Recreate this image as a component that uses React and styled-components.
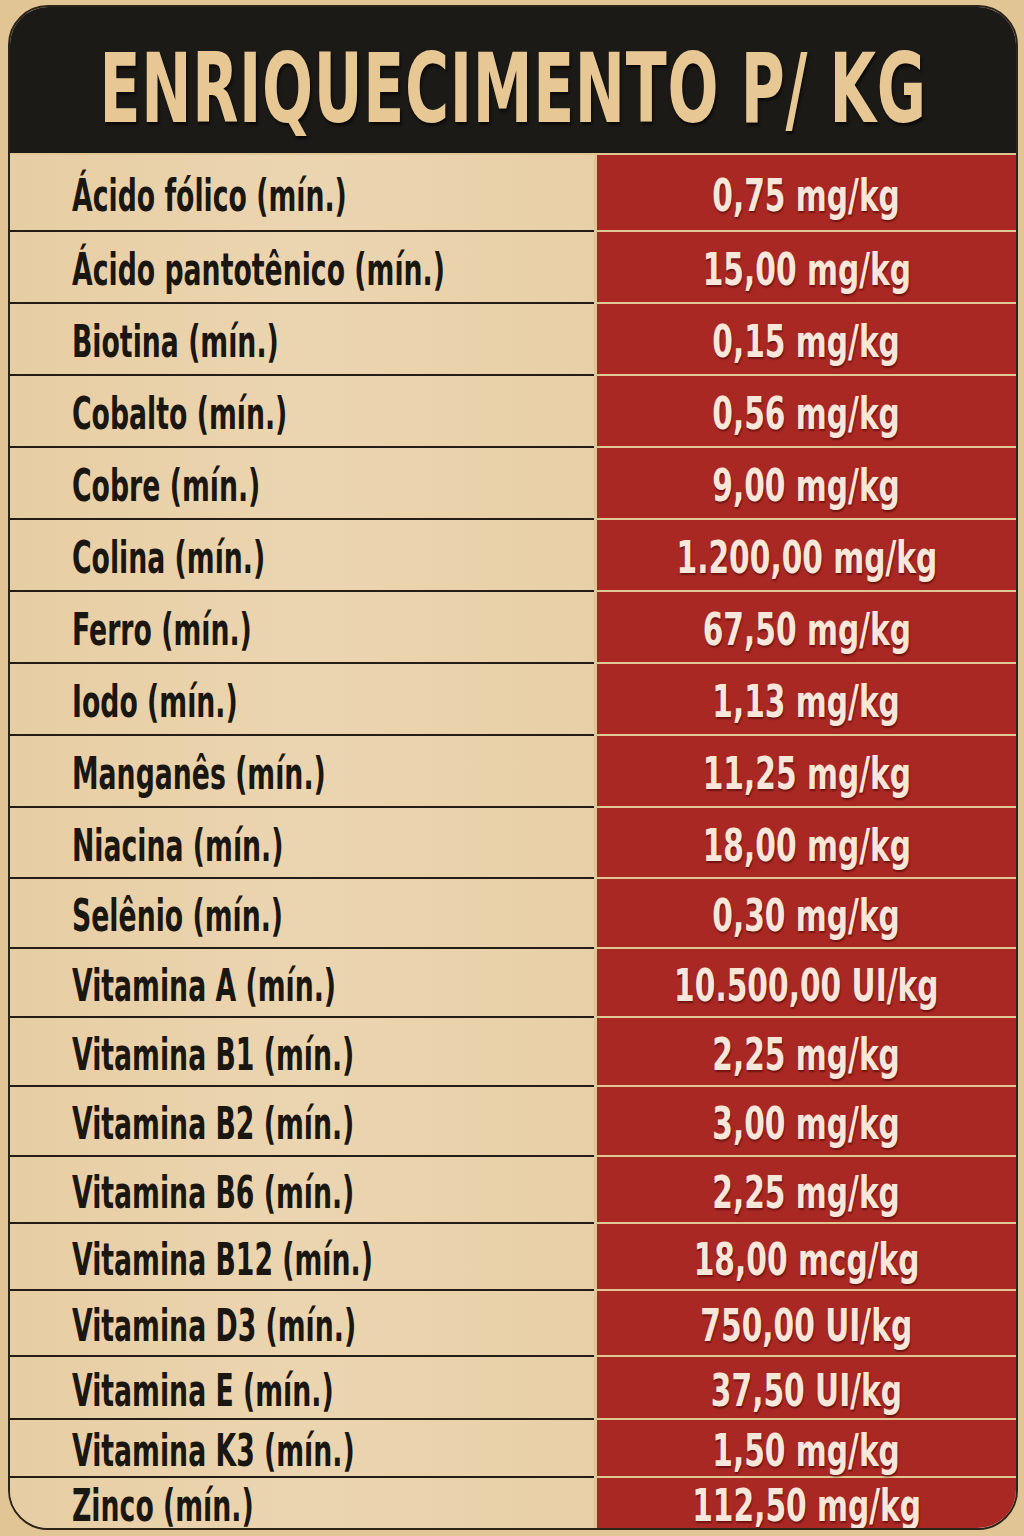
import { Fragment } from "react";
import styled, { createGlobalStyle } from "styled-components";

const GlobalStyle = createGlobalStyle`
  html, body {
    margin: 0;
    padding: 0;
    background: #e2c595;
  }
  body {
    font-family: "DejaVu Sans Condensed", "DejaVu Sans", sans-serif;
  }
`;

const rows = [
  { name: "Ácido fólico (mín.)", value: "0,75 mg/kg", h: 77 },
  { name: "Ácido pantotênico (mín.)", value: "15,00 mg/kg", h: 72 },
  { name: "Biotina (mín.)", value: "0,15 mg/kg", h: 72 },
  { name: "Cobalto (mín.)", value: "0,56 mg/kg", h: 72 },
  { name: "Cobre (mín.)", value: "9,00 mg/kg", h: 72 },
  { name: "Colina (mín.)", value: "1.200,00 mg/kg", h: 72 },
  { name: "Ferro (mín.)", value: "67,50 mg/kg", h: 72 },
  { name: "Iodo (mín.)", value: "1,13 mg/kg", h: 72 },
  { name: "Manganês (mín.)", value: "11,25 mg/kg", h: 72 },
  { name: "Niacina (mín.)", value: "18,00 mg/kg", h: 71 },
  { name: "Selênio (mín.)", value: "0,30 mg/kg", h: 70 },
  { name: "Vitamina A (mín.)", value: "10.500,00 UI/kg", h: 69 },
  { name: "Vitamina B1 (mín.)", value: "2,25 mg/kg", h: 69 },
  { name: "Vitamina B2 (mín.)", value: "3,00 mg/kg", h: 70 },
  { name: "Vitamina B6 (mín.)", value: "2,25 mg/kg", h: 67 },
  { name: "Vitamina B12 (mín.)", value: "18,00 mcg/kg", h: 67 },
  { name: "Vitamina D3 (mín.)", value: "750,00 UI/kg", h: 66 },
  { name: "Vitamina E (mín.)", value: "37,50 UI/kg", h: 63 },
  { name: "Vitamina K3 (mín.)", value: "1,50 mg/kg", h: 58 },
  { name: "Zinco (mín.)", value: "112,50 mg/kg", h: 50 },
];

const Page = styled.div`
  padding: 5px 6px 4px 8px;
  background: #e2c595;
`;

const Card = styled.div`
  border: 2px solid #2b241b;
  border-radius: 40px;
  overflow: hidden;
  background: #e9d1a9;
`;

const Header = styled.div`
  height: 148px;
  background: #1c1a17;
  display: flex;
  align-items: center;
  justify-content: center;
  border-bottom: 2px solid #e2c595;
  box-sizing: border-box;
`;

const Title = styled.h1`
  margin: 0;
  font-family: "DejaVu Sans Condensed", "DejaVu Sans", sans-serif;
  font-weight: 700;
  font-size: 96px;
  line-height: 1;
  color: #e7c794;
  letter-spacing: 1px;
  transform: scaleX(0.695);
  white-space: nowrap;
  text-shadow: 2px 3px 3px rgba(0, 0, 0, 0.6);
  padding-top: 18px;
`;

const Table = styled.div`
  display: grid;
  grid-template-columns: 584px 1fr;
`;

const Label = styled.div`
  height: ${(p) => p.$h}px;
  box-sizing: border-box;
  border-bottom: ${(p) => (p.$last ? "none" : "2px solid #231d16")};
  background: linear-gradient(90deg, #e7cda3, #ebd5b0 50%, #e8cfa7);
  display: flex;
  align-items: center;
  padding-left: 62px;
`;

const Value = styled.div`
  height: ${(p) => p.$h}px;
  box-sizing: border-box;
  border-left: 3px solid #e2c595;
  border-bottom: ${(p) => (p.$last ? "none" : "2px solid #e2c595")};
  background: #aa2824;
  display: flex;
  align-items: center;
  justify-content: center;
`;

const LabelText = styled.span`
  display: inline-block;
  font-weight: 700;
  font-size: 44px;
  line-height: 1;
  color: #1a1612;
  white-space: nowrap;
  transform: scaleX(0.675);
  transform-origin: left center;
  padding-top: 6px;
`;

const ValueText = styled.span`
  display: inline-block;
  font-weight: 700;
  font-size: 44px;
  line-height: 1;
  color: #f6e7da;
  white-space: nowrap;
  transform: scaleX(0.75);
  transform-origin: center;
  padding-top: 6px;
  text-shadow: 1px 2px 2px rgba(60, 0, 0, 0.55);
`;

export default function App() {
  return (
    <>
      <GlobalStyle />
      <Page>
        <Card>
          <Header>
            <Title>ENRIQUECIMENTO P/ KG</Title>
          </Header>
          <Table>
            {rows.map((r, i) => (
              <Fragment key={r.name}>
                <Label $h={r.h} $last={i === rows.length - 1}>
                  <LabelText>{r.name}</LabelText>
                </Label>
                <Value $h={r.h} $last={i === rows.length - 1}>
                  <ValueText>{r.value}</ValueText>
                </Value>
              </Fragment>
            ))}
          </Table>
        </Card>
      </Page>
    </>
  );
}
